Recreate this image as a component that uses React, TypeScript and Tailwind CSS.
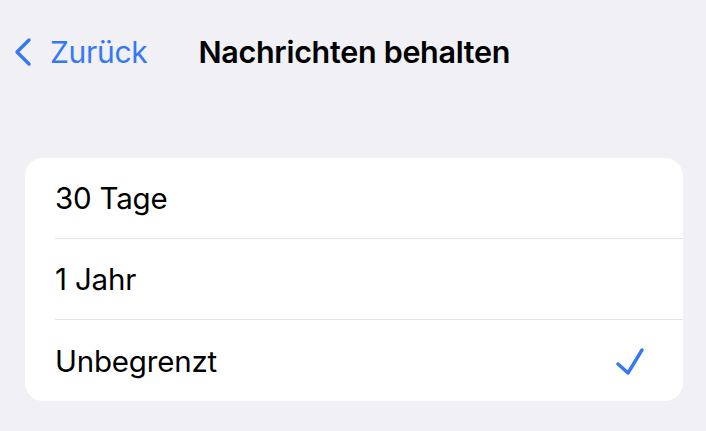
import React from "react";

const options = ["30 Tage", "1 Jahr", "Unbegrenzt"];

export default function App() {
  const selected = 2;

  return (
    <div
      className="w-[706px] h-[431px] bg-[#f0f0f5] overflow-hidden text-black"
      style={{ fontFamily: "Inter, 'Noto Sans', sans-serif" }}
    >
      <header className="flex items-center h-[106px] pb-[2px]">
        <button className="flex items-center pl-[12px] text-[#3478f6]">
          <svg width="22" height="32" viewBox="0 0 22 32" fill="none" className="mr-[16px]">
            <path d="M17 4 L5 16 L17 28" stroke="#3478f6" strokeWidth="3.4" strokeLinecap="round" strokeLinejoin="round" />
          </svg>
          <span className="text-[30px] leading-none tracking-[-0.3px]">Zurück</span>
        </button>
        <h1 className="ml-[51px] text-[30.5px] font-semibold leading-none tracking-[-0.3px]">
          Nachrichten behalten
        </h1>
      </header>

      <div className="mt-[52px] mx-[25px] w-[658px] bg-white rounded-[18px] overflow-hidden">
        {options.map((label, i) => (
          <div key={label} className="pl-[30px]">
            <div
              className={`flex items-center justify-between h-[81px] pr-[38px] ${
                i < options.length - 1 ? "border-b border-[#e3e3e8]" : ""
              }`}
            >
              <span className="text-[29.5px] leading-none tracking-[-0.2px] pt-[2px]">{label}</span>
              {i === selected && (
                <svg width="30" height="28" viewBox="0 0 30 28" fill="none">
                  <path d="M3 17 L13 26 L27 3" stroke="#3478f6" strokeWidth="3.4" strokeLinecap="round" strokeLinejoin="round" />
                </svg>
              )}
            </div>
          </div>
        ))}
      </div>
    </div>
  );
}
